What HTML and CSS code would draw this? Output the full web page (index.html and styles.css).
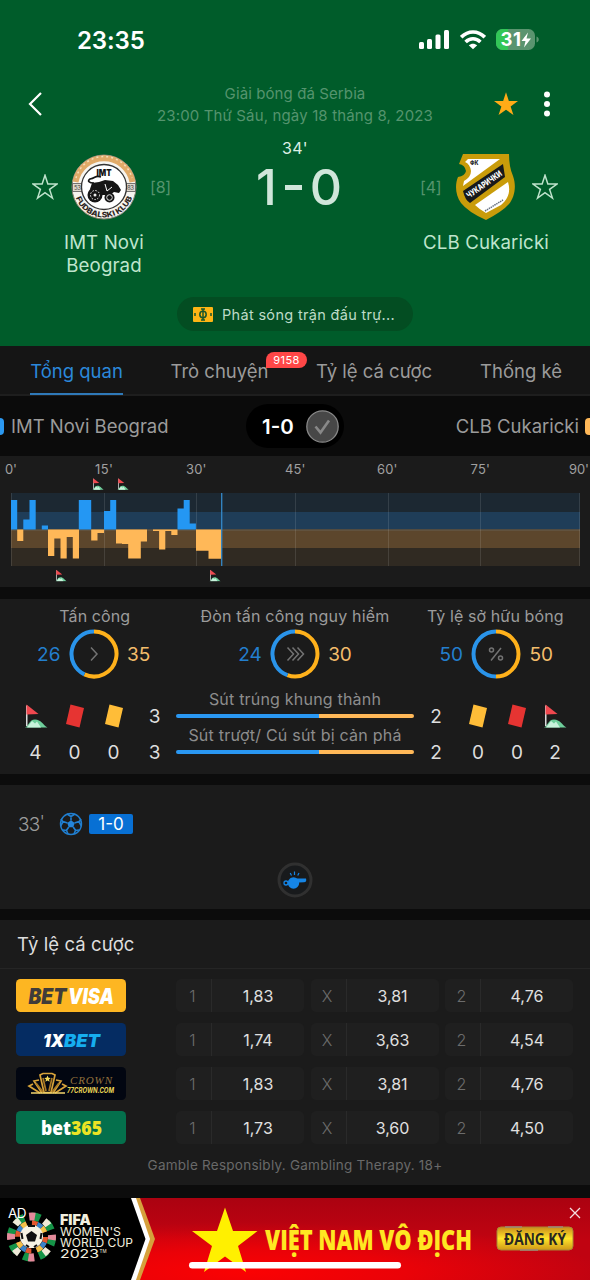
FILE: index.html
```html
<!DOCTYPE html>
<html lang="vi">
<head>
<meta charset="utf-8">
<title>IMT Novi Beograd - CLB Cukaricki</title>
<link rel="stylesheet" href="styles.css">
</head>
<body>
<svg class="defs" width="0" height="0">
  <symbol id="flag" viewBox="0 0 24 24">
    <path d="M1 23.5C5 22 5 15.500 11 15.500S19 21 23.500 23.500Z" fill="#6fcf9c"/>
    <path d="M3 23.500L8 17l3 2.500 2-2 4 6Z" fill="#c9f2dc"/>
    <path d="M2 1.500h1.500V22H2Z" fill="#d9dcdc"/>
    <path d="M2.500 .500L14.500 10 2.500 10.500Z" fill="#f0484f"/>
  </symbol>
  <symbol id="star" viewBox="0 0 26 26">
    <path d="M13 1.300l2.850 8.700h9.150l-7.400 5.400 2.850 8.700-7.450-5.400-7.450 5.400 2.850-8.700-7.400-5.400h9.150Z"/>
  </symbol>
  <symbol id="card" viewBox="0 0 20 24"><path d="M5.500 .500L19 4 14.500 23.500 1 20Z" fill="currentColor"/></symbol>
</svg>

<header class="header">
  <div class="status">
    <span class="clock">23:35</span>
    <svg class="signal" width="31" height="20" viewBox="0 0 31 20" fill="#fff"><rect x="0" y="12" width="5" height="7" rx="1.500"/><rect x="8" y="9" width="5" height="10" rx="1.500"/><rect x="16.500" y="4.500" width="5" height="14.500" rx="1.500"/><rect x="25" y="0" width="5" height="19" rx="1.500"/></svg>
    <svg class="wifi" width="26" height="20" viewBox="0 0 26 20" fill="none" stroke="#fff" stroke-width="3.600"><path d="M1.200 7.200C8 .2 18 .2 24.800 7.200"/><path d="M5.600 12C10 7.700 16 7.700 20.400 12"/><path d="M13 19.300L8.800 15.300C11.300 13.100 14.700 13.100 17.200 15.300Z" fill="#fff" stroke="none"/></svg>
    <svg class="battery" width="44" height="22" viewBox="0 0 44 22"><rect width="39" height="21" rx="6.500" fill="#5a946f"/><path d="M6.500 0H12V21H6.500A6.500 6.500 0 0 1 0 14.500V6.500A6.500 6.500 0 0 1 6.500 0Z" fill="#32c657"/><path d="M40.500 7.500c3 1 3 5 0 6Z" fill="#5a946f"/><text x="4.500" y="17.300" textLength="20.500" font-size="18.500" font-weight="700" fill="#fff">31</text><path d="M32 3.500L25.500 12h4l-1.500 6.500L35 9.500h-4.500Z" fill="#fff"/></svg>
  </div>
  <div class="topbar">
    <svg class="back" width="16" height="26" viewBox="0 0 16 26" fill="none" stroke="#fff" stroke-width="2.200"><path d="M14 2L3 13l11 11"/></svg>
    <div class="league"><div class="l1">Giải bóng đá Serbia</div><div class="l2">23:00 Thứ Sáu, ngày 18 tháng 8, 2023</div></div>
    <svg class="fav" width="26" height="26" fill="#ffab17"><use href="#star"/></svg>
    <svg class="dots" width="8" height="26" fill="#fff"><circle cx="4" cy="3.500" r="3"/><circle cx="4" cy="13" r="3"/><circle cx="4" cy="22.500" r="3"/></svg>
  </div>
  <div class="match">
    <svg class="outline" width="26" height="26"><use href="#star"/></svg>
    <svg class="crest" width="66" height="66" viewBox="0 0 66 66">
      <circle cx="33" cy="33" r="32" fill="#f6f4ef" stroke="#8b8374"/>
      <path d="M4.500 28A29 29 0 0 1 61.500 28" fill="none" stroke="#e0aa68" stroke-width="6"/>
      <path d="M5 24A29 29 0 0 1 61 24" fill="none" stroke="#f5dcb8" stroke-width="1.500" stroke-dasharray="2 3"/>
      <path d="M1.500 29.500h10v8h-10ZM54.500 29.500h10v8h-10Z" fill="#ded8cd" stroke="#555" stroke-width=".8"/>
      <circle cx="33" cy="33" r="22.500" fill="#fff" stroke="#333" stroke-width="1.300"/>
      <text x="3" y="36" font-size="6" fill="#444" textLength="7">53</text><text x="56" y="36" font-size="6" fill="#444" textLength="7">83</text>
      <text x="25.500" y="21.500" font-size="9.500" font-weight="900" fill="#111" textLength="15" lengthAdjust="spacingAndGlyphs">IMT</text>
      <path d="M19 35l2-6 7-1 6-2 8 1 5 4 3 5-2 3-5-1-4 3H29l-8-1Z" fill="#151515"/>
      <path d="M34 30l2 7 5-4" stroke="#fff" fill="none"/>
      <path d="M23 29c-5 0-7-2-4-4 6-1 5-4 11-2" fill="none" stroke="#151515" stroke-width="1.700"/>
      <circle cx="24" cy="41" r="7.500" fill="#151515"/><circle cx="24" cy="41" r="4.500" fill="none" stroke="#eee" stroke-dasharray="1.500 1.500"/><circle cx="24" cy="41" r="1.500" fill="#eee"/>
      <circle cx="38.500" cy="43.500" r="5" fill="#151515"/><circle cx="38.500" cy="43.500" r="2.800" fill="none" stroke="#ddd"/>
      <path id="crestArc" d="M3.500 39A30 30 0 0 0 62.500 39" fill="none"/>
      <text font-size="7.600" font-weight="800" fill="#2e2623" textLength="73" lengthAdjust="spacingAndGlyphs"><textPath href="#crestArc" startOffset="5">FUDBALSKI KLUB</textPath></text>
    </svg>
    <span class="rank">[8]</span>
    <div class="score"><span class="minute">34'</span><span class="goals">1<i></i>0</span></div>
    <span class="rank">[4]</span>
    <svg class="crest" width="66" height="68" viewBox="0 0 66 68">
      <path d="M10 1H56Q56 14 60 23C64 34 61 45 56 51Q50 58 33 67 15 59 8 50C2 42 2 31 5 24Q12 23 13 18 12 12 6 11Z" fill="#c99c0a"/>
      <path d="M15 6H47L10 33 11 28Q18 24 18 18 17 11 12 9Z" fill="#fff"/><path d="M55 29C58 39 55 46 48 52L33 60Q26 56 22 52Z" fill="#fff"/>
      <path d="M10 38L50 11 52 24 17 50Q12 47 10 38Z" fill="#17191b"/>
      <text x="17" y="12" font-size="6" font-weight="800" fill="#222" textLength="8.500" lengthAdjust="spacingAndGlyphs">ФК</text>
      <text transform="translate(16 45.500) rotate(-35)" font-size="8.500" font-weight="800" fill="#fff" textLength="41" lengthAdjust="spacingAndGlyphs">ЧУКАРИЧКИ</text>
      <path d="M32 58L50 47" stroke="#647080" stroke-width="1.500" stroke-dasharray="1.500 .7"/>
    </svg>
    <svg class="outline" width="26" height="26"><use href="#star"/></svg>
  </div>
  <div class="names"><span class="name">IMT Novi<br>Beograd</span><span class="name away">CLB Cukaricki</span></div>
  <div class="live">
    <svg width="20" height="15" viewBox="0 0 20 15"><rect width="20" height="15" rx="1" fill="#fdb515"/><path d="M10 1.500v12M8 2h4M8 13h4M2 6v3M18 6v3" stroke="#17552c" stroke-width="1.500"/><circle cx="10" cy="7.500" r="3.200" fill="none" stroke="#17552c" stroke-width="1.500"/></svg>
    <span>Phát sóng trận đấu trự...</span>
  </div>
</header>

<nav class="tabs">
  <span class="tab active">Tổng quan</span>
  <span class="tab chat">Trò chuyện<b class="badge">9158</b></span>
  <span class="tab odds-tab">Tỷ lệ cá cược</span>
  <span class="tab stat-tab">Thống kê</span>
</nav>

<div class="scorebar">
  <i class="mark home-mark"></i><span class="side home">IMT Novi Beograd</span>
  <div class="toggle"><span>1-0</span><svg width="33" height="33" viewBox="0 0 33 33"><circle cx="16.500" cy="16.500" r="15.700" fill="#474747" stroke="#888" stroke-width="1.300"/><path d="M9.500 16.500l5 6L23 10.500" fill="none" stroke="#888" stroke-width="2.600"/></svg></div>
  <span class="side guest">CLB Cukaricki</span><i class="mark guest-mark"></i>
</div>

<section class="chart">
  <svg width="590" height="131" viewBox="0 456 590 131">
    <g class="axis"><text x="5" y="474" textLength="12">0'</text><text x="95" y="474" textLength="18">15'</text><text x="186" y="474" textLength="20.500">30'</text><text x="285" y="474" textLength="20.500">45'</text><text x="377" y="474" textLength="20.500">60'</text><text x="470.500" y="474" textLength="19.500">75'</text><text x="569" y="474" textLength="20">90'</text></g>
    <rect x="11" y="493" width="569" height="19" fill="#1c2832"/><rect x="11" y="512" width="569" height="17.500" fill="#1f3d58"/>
    <rect x="11" y="529.500" width="569" height="18.500" fill="#5c462c"/><rect x="11" y="548" width="569" height="18" fill="#302a22"/>
    <path d="M11 530h569" stroke="#665e50"/>
    <path d="M11.500 493v73M104.500 493v73M196.500 493v73M295.500 493v73M388.500 493v73M480.500 493v73M579.500 493v73" stroke="#fff" stroke-opacity=".11"/>
    <path fill="#2497f3" d="M11 500h6.200v29.500H11ZM23.300 519.500h6.200V500h6.200v29.500H23.300ZM41.800 525.500H48v4h-6.200ZM78.800 500h12.400v29.500H78.800ZM104 511h6.200V500h6v29.500H104ZM177.500 508.500h6.200V500h6v23.500h6.200v6h-18.400Z"/>
    <path fill="#ffb858" d="M17.200 529.500h6.100V541h-6.100ZM48 529.500h31V558.500h-6.200V537h-6.100v21.500h-6.200v-20h-6.200V556H48ZM91.200 529.500H104V533h-6.500v7.500h-6.300ZM116 529.500h31V541.500h-6.200v17H128.200V544H122v-.500h-6ZM153 529.500h24.500V535h-6.200v-4h-6v18.500h-6.200V531H153ZM196 529.500h25.200v29.200h-12.700v-8H196Z"/>
    <path d="M221.700 493v73" stroke="#3488c8" stroke-width="1.300"/>
    <use href="#flag" x="92" y="478" width="12" height="12"/><use href="#flag" x="117" y="478" width="12" height="12"/><use href="#flag" x="55" y="569.500" width="12" height="12"/><use href="#flag" x="209" y="569.500" width="12" height="12"/>
  </svg>
</section>

<section class="stats">
  <div class="rings">
    <div class="stat"><div class="stat-title t1">Tấn công</div><div class="stat-row"><span class="hv">26</span><svg width="50" height="50" viewBox="0 0 50 50" fill="none"><path class="ring-a" d="M25 2.500A22.500 22.500 0 1 1 15.400 45.350"/><path class="ring-h" d="M25 2.500A22.500 22.500 0 0 0 15.400 45.350"/><path class="glyph" d="M22 18.500l6 6.500-6 6.500"/></svg><span class="av">35</span></div></div>
    <div class="stat"><div class="stat-title t2">Đòn tấn công nguy hiểm</div><div class="stat-row"><span class="hv">24</span><svg width="50" height="50" viewBox="0 0 50 50" fill="none"><path class="ring-a" d="M25 2.500A22.500 22.500 0 1 1 17.400 46.200"/><path class="ring-h" d="M25 2.500A22.500 22.500 0 0 0 17.400 46.200"/><path class="glyph" d="M17.500 18.500l6 6.500-6 6.500M22.500 18.500l6 6.500-6 6.500M27.500 18.500l6 6.500-6 6.500"/></svg><span class="av">30</span></div></div>
    <div class="stat"><div class="stat-title t3">Tỷ lệ sở hữu bóng</div><div class="stat-row"><span class="hv">50</span><svg width="50" height="50" viewBox="0 0 50 50" fill="none"><path class="ring-a" d="M25 2.500A22.500 22.500 0 0 1 25 47.500"/><path class="ring-h" d="M25 2.500A22.500 22.500 0 0 0 25 47.500"/><g class="glyph"><path d="M30 19L20 31.500"/><circle cx="20.500" cy="21" r="2"/><circle cx="29.500" cy="29" r="2"/></g></svg><span class="av">50</span></div></div>
  </div>
  <div class="counts">
    <svg width="24" height="24"><use href="#flag"/></svg><svg class="red" width="20" height="24"><use href="#card"/></svg><svg class="yellow" width="20" height="24"><use href="#card"/></svg><span>3</span>
    <div class="meter"><span class="m1">Sút trúng khung thành</span><i></i></div>
    <span>2</span><svg class="yellow" width="20" height="24"><use href="#card"/></svg><svg class="red" width="20" height="24"><use href="#card"/></svg><svg width="24" height="24"><use href="#flag"/></svg>
    <span>4</span><span>0</span><span>0</span><span>3</span>
    <div class="meter"><span class="m2">Sút trượt/ Cú sút bị cản phá</span><i></i></div>
    <span>2</span><span>0</span><span>0</span><span>2</span>
  </div>
</section>

<section class="events">
  <div class="event">
    <span class="when">33<sup>'</sup></span>
    <svg width="24" height="24" viewBox="0 0 24 24"><circle cx="12" cy="12" r="10.500" fill="#1b1b1b" stroke="#217fd0" stroke-width="1.400"/><path d="M12 8.200l3.700 2.700-1.400 4.300H9.700l-1.400-4.300Z" fill="#2585da"/><path d="M12 8.500V4M15.500 11l4.500-1.500M14.200 15l2.800 4M9.800 15L7 19M8.500 11L4 9.500M8 2l4 2.500L16 2M22 7l-2 3 2.500 4M20 18l-3.500.5L15 22M9 22L7.500 18.500 4 18M1.500 14L4 10 2 7" fill="none" stroke="#217fd0" stroke-width="1.600"/></svg>
    <b class="result">1-0</b>
  </div>
  <div class="whistle"><svg width="36" height="36" viewBox="0 0 36 36"><circle cx="18" cy="18" r="16" fill="#181a1c" stroke="#303030" stroke-width="3"/><circle cx="16.500" cy="21" r="5.700" fill="#1585e6"/><path d="M13 16.500h16q1 3.500-2 3.700L22 20.500l-5 1Z" fill="#1585e6"/><circle cx="9" cy="21" r="2" fill="none" stroke="#1585e6" stroke-width="1.300"/><path d="M14.500 13.500l-1.300-2.500M17.500 13V9.500M20.700 13.500l1.300-2.500" stroke="#1585e6" stroke-width="1.200"/></svg></div>
</section>

<section class="odds">
  <h2>Tỷ lệ cá cược</h2>
  <div class="rows">
    <div class="row"><svg class="logo" viewBox="0 0 110 33"><rect width="110" height="33" rx="4.500" fill="#fdb622"/><g font-size="21.500" font-weight="900" font-style="italic"><text x="12.500" y="24.500" fill="#403c39" textLength="38" lengthAdjust="spacingAndGlyphs">BET</text><text x="52" y="24.500" fill="#fff" textLength="46" lengthAdjust="spacingAndGlyphs">VISA</text></g></svg><div class="cell"><em>1</em><span>1,83</span></div><div class="cell"><em>X</em><span>3,81</span></div><div class="cell"><em>2</em><span>4,76</span></div></div>
    <div class="row"><svg class="logo" viewBox="0 0 110 33"><rect width="110" height="33" rx="4.500" fill="#052c62"/><g font-size="18" font-weight="900" font-style="italic"><text x="27" y="23.500" fill="#fff" textLength="21" lengthAdjust="spacingAndGlyphs">1X</text><text x="48" y="23.500" fill="#16aeef" textLength="36" lengthAdjust="spacingAndGlyphs">BET</text></g></svg><div class="cell"><em>1</em><span>1,74</span></div><div class="cell"><em>X</em><span>3,63</span></div><div class="cell"><em>2</em><span>4,54</span></div></div>
    <div class="row"><svg class="logo" viewBox="0 0 110 33"><rect width="110" height="33" rx="4.500" fill="#020611"/><g fill="none" stroke="#d8a33a" stroke-width="1.700"><path d="M24 8l3-1.500h9l3 1.500-4 17.500h-7Z"/><path d="M23 13l-5 1 8 12M40 13l5 1-8 12M17 17l-4 2 11 7M46 17l4 2-11 7"/><path d="M15 26h34" stroke="#f3d56e"/><path d="M27 11l3 13M36 11l-3 13M20 16l7 9M43 16l-7 9" stroke="#a87825"/></g><path d="M31.500 8.500l1 2.200 2.300.2-1.800 1.500.6 2.400-2.100-1.300-2.100 1.300.6-2.400-1.800-1.500 2.300-.2Z" fill="#f5dc5d"/><text class="script" x="54" y="17" font-size="11" fill="#94723d" textLength="42">CROWN</text><text x="51" y="26.300" font-size="7" font-weight="700" font-style="italic" fill="#e8d355" textLength="47" lengthAdjust="spacingAndGlyphs">77CROWN.COM</text></svg><div class="cell"><em>1</em><span>1,83</span></div><div class="cell"><em>X</em><span>3,81</span></div><div class="cell"><em>2</em><span>4,76</span></div></div>
    <div class="row"><svg class="logo open" viewBox="0 0 110 33"><rect width="110" height="33" rx="4.500" fill="#04704c"/><g font-size="18.500" font-weight="800"><text x="25" y="24" fill="#fff" textLength="30" lengthAdjust="spacingAndGlyphs">bet</text><text x="55" y="24" fill="#ece324" textLength="31" lengthAdjust="spacingAndGlyphs">365</text></g></svg><div class="cell"><em>1</em><span>1,73</span></div><div class="cell"><em>X</em><span>3,60</span></div><div class="cell"><em>2</em><span>4,50</span></div></div>
  </div>
  <p class="notice">Gamble Responsibly. Gambling Therapy. 18+</p>
</section>

<footer class="ad">
  <svg width="590" height="82" viewBox="0 0 590 82">
    <defs><radialGradient id="red" cx=".42" cy=".9" r=".6"><stop offset="0" stop-color="#fb0203"/><stop offset=".45" stop-color="#ea0208"/><stop offset="1" stop-color="#c00311"/></radialGradient><linearGradient id="shade" x2="0" y2="1"><stop stop-color="#8b0010" stop-opacity=".4"/><stop offset=".5" stop-color="#8b0010" stop-opacity="0"/></linearGradient><linearGradient id="gold" x2="0" y2="1"><stop stop-color="#c98b1b"/><stop offset=".5" stop-color="#ffe52a"/><stop offset="1" stop-color="#cf9817"/></linearGradient></defs>
    <rect width="590" height="82" fill="url(#red)"/><rect width="590" height="82" fill="url(#shade)"/>
    <path d="M0 0H140L155 41 140 82H0Z" fill="#d6a03c"/><path d="M0 0H136L150 41 136 82H0Z" fill="#fff"/><path d="M0 0H131L145.500 41 131 82H0Z" fill="#000"/>
    <g fill="none"><circle cx="31.500" cy="39" r="20.500" stroke="#159447" stroke-width="8" stroke-dasharray="8.050 8.050"/><circle cx="31.500" cy="39" r="20.500" stroke="#e58a9b" stroke-width="8" stroke-dasharray="6 26.200" stroke-dashoffset="3"/><circle cx="31.500" cy="39" r="20.500" stroke="#f0ead8" stroke-width="7" stroke-dasharray="6 26.200" stroke-dashoffset="-13"/><circle cx="31.500" cy="39" r="14" stroke="#e5572d" stroke-width="5" stroke-dasharray="5.500 5.500"/><circle cx="31.500" cy="39" r="14" stroke="#3b83c9" stroke-width="5" stroke-dasharray="5.500 16.490" stroke-dashoffset="-5.500"/><circle cx="31.500" cy="39" r="14" stroke="#f2c24a" stroke-width="5" stroke-dasharray="5.500 16.490" stroke-dashoffset="-11"/></g>
    <circle cx="31.500" cy="38.500" r="11.500" fill="#f7f3e4"/><path d="M31.500 33l5.500 4-2 6.500h-7L26 37Z" fill="#111"/><path d="M28 28h7M21.500 35l1 6M41.500 35l-1 6M26 47l3 2M37 47l-3 2" stroke="#111" stroke-width="2"/>
    <text x="8" y="19.500" font-size="13.500" fill="#fff" textLength="18.500">AD</text>
    <g class="fifa"><text x="60" y="26.500" font-size="14" font-weight="900" textLength="31" lengthAdjust="spacingAndGlyphs">FIFA</text><text x="60" y="37.500" textLength="61" lengthAdjust="spacingAndGlyphs">WOMEN'S</text><text x="60" y="48.500" textLength="73" lengthAdjust="spacingAndGlyphs">WORLD CUP</text><text x="60" y="60" textLength="39" lengthAdjust="spacingAndGlyphs">2023</text><text class="tm" x="99.500" y="54.500" textLength="7">TM</text></g>
    <path d="M225 9.500l8 23.500h24.500L238 48l8 26-21-15.500L204 74l8-26-20-15h25Z" fill="#fff000"/>
    <text class="slogan" x="265" y="51.500" textLength="207" lengthAdjust="spacingAndGlyphs">VIỆT NAM VÔ ĐỊCH</text>
    <rect x="497" y="29" width="76" height="23" rx="4" fill="url(#gold)" stroke="#a98635"/>
    <path d="M505 29h17M548 29h15M520 52h18" stroke="#9b897a" stroke-width="1.500"/>
    <text class="join" x="504" y="46.500" textLength="62" lengthAdjust="spacingAndGlyphs">ĐĂNG KÝ</text>
    <path d="M570 10l10 10M580 10l-10 10" stroke="#f4dfe0" stroke-width="1.300"/>
    <rect x="189" y="64" width="212" height="6.500" rx="3.250" fill="#fff"/>
  </svg>
</footer>
</body>
</html>
```
FILE: styles.css
```css
* { box-sizing: border-box; }
body { margin: 0; width: 590px; height: 1280px; overflow: hidden; background: #0c0c0c; color: #9b9b9b; font-family: Inter, "Noto Sans", sans-serif; white-space: nowrap; }
svg { display: block; flex: none; }
.defs { position: absolute; }

.header { height: 346px; background: #005c2a; }
.status { display: flex; align-items: center; height: 80px; padding-left: 77px; }
.clock { width: 342px; font-size: 24px; font-weight: 600; color: #fff; letter-spacing: -.1px; }
.wifi { margin-left: 10px; }
.battery { margin-left: 10px; }
.topbar { display: flex; align-items: center; height: 48px; padding-left: 27px; }
.league { width: 450px; margin-left: 27px; padding-top: 1px; text-align: center; font-size: 15px; line-height: 22px; color: #55946e; }
.l1 { letter-spacing: .1px; }
.l2 { letter-spacing: .14px; }
.fav { margin-left: -27px; }
.dots { margin-left: 24px; }
.match { display: flex; align-items: center; height: 96px; margin-top: 11px; padding-left: 32px; }
.outline { fill: none; stroke: #bfe3cc; stroke-width: 1.5px; }
.crest { margin: 0 13px; }
.rank { width: 20px; text-align: center; font-size: 16px; color: #55946e; letter-spacing: -.2px; }
.score { display: flex; flex-direction: column; align-items: center; width: 250px; height: 96px; }
.minute { line-height: 18px; font-size: 16px; color: #dcefe4; letter-spacing: .3px; }
.goals { display: flex; align-items: center; gap: 8px; margin-left: 8px; line-height: 60px; font-size: 50px; font-weight: 500; color: #d0e6da; }
.goals i { width: 17px; height: 5px; background: #d0e6da; }
.names { display: flex; justify-content: space-between; margin-top: -4px; padding: 0 29px; text-align: center; font-size: 18.700px; line-height: 23px; color: #bfe5cd; letter-spacing: .1px; }
.name { width: 150px; }
.live { display: flex; align-items: center; gap: 9px; width: 236px; height: 34px; margin: 20px auto 0; padding-left: 16px; border-radius: 17px; background: #034d22; color: #bedbc8; font-size: 14.500px; letter-spacing: .32px; }

.tabs { display: flex; gap: 48px; height: 50px; padding-left: 30px; background: #151515; border-bottom: 2px solid #1e1e1e; font-size: 18.500px; line-height: 50px; }
.tab { position: relative; display: flex; justify-content: center; width: 93px; height: 49px; }
.active { color: #2b88da; border-bottom: 2px solid #2f79b8; }
.chat { width: 97px; }
.odds-tab { width: 116px; }
.stat-tab { width: 82px; }
.badge { position: absolute; left: 95px; top: 6px; width: 41px; height: 16px; border-radius: 8px 8px 8px 0; background: #ff4747; color: #fff; font-size: 11px; font-weight: 400; line-height: 16px; text-align: center; letter-spacing: .4px; }

.scorebar { display: flex; align-items: center; height: 60px; background: #0b0b0b; font-size: 18.500px; }
.mark { flex: none; width: 4px; height: 17px; }
.home-mark { background: #2b98f0; border-radius: 0 4px 4px 0; }
.guest-mark { width: 5px; margin-left: 6px; background: #ffb858; border-radius: 4px 0 0 4px; }
.side { width: 235px; }
.home { margin-left: 7px; }
.guest { text-align: right; }
.toggle { display: flex; align-items: center; justify-content: space-between; flex: none; width: 98px; height: 44px; padding: 0 5px 0 16px; border-radius: 22px; background: #000; color: #fff; font-size: 20.500px; font-weight: 600; }

.chart { height: 131px; background: #1b1b1b; }
.axis text { font-size: 13px; fill: #a0a0a0; }

.stats { height: 175px; margin-top: 12px; background: #1b1b1b; }
.rings { display: grid; grid-template-columns: repeat(3, 201.25px); justify-content: center; }
.stat-title { height: 30px; padding-top: 6px; text-align: center; font-size: 16px; line-height: 22px; letter-spacing: .1px; }
.t1 { padding-left: 2px; }
.t2 { letter-spacing: .2px; }
.t3 { padding-right: 2px; }
.stat-row { display: flex; align-items: center; justify-content: center; gap: 8px; font-size: 19px; }
.stat-row span { width: 24px; text-align: center; }
.hv { color: #237fce; }
.av { color: #f3bd6b; }
.ring-a { stroke: #ffb11b; stroke-width: 4px; }
.ring-h { stroke: #2a94ea; stroke-width: 4px; }
.glyph { stroke: #737373; stroke-width: 1.5px; }
.counts { display: grid; grid-template-columns: 39px 39px 39px 43px 238px 44px 40px 38px 38px; grid-template-rows: 36px 36px; align-items: center; justify-items: center; margin-top: 19px; padding-left: 16px; color: #dedede; font-size: 19px; }
.red { color: #e63432; }
.yellow { color: #ffbd38; }
.meter { width: 238px; height: 57px; text-align: center; color: #8d8d8d; font-size: 16px; line-height: 22px; }
.meter i { display: block; height: 4px; margin-top: 4px; border-radius: 2px; background: linear-gradient(90deg, #2a98f3 60%, #ffb858 60%); }
.m1 { letter-spacing: .2px; }
.m2 { letter-spacing: .22px; }

.events { height: 124px; margin-top: 11px; padding-top: 24px; background: #1b1b1b; }
.event { display: flex; align-items: center; height: 30px; padding-left: 18px; }
.when { width: 41px; font-size: 19px; font-weight: 300; letter-spacing: -.7px; }
.when sup { font-size: 17px; line-height: 0; vertical-align: 3px; }
.result { width: 44px; height: 20px; margin-left: 6px; border-radius: 2px; background: #0870d4; color: #fff; font-size: 17px; font-weight: 400; line-height: 20px; text-align: center; }
.whistle { display: flex; justify-content: center; margin-top: 23px; }

.odds { height: 265px; margin-top: 11px; background: #1b1b1b; }
.odds h2 { height: 49px; margin: 0; padding-left: 17px; border-bottom: 1px solid #252525; color: #dedede; font-size: 18.500px; font-weight: 400; line-height: 48px; letter-spacing: .1px; }
.rows { display: grid; gap: 11px; padding: 10px 0 0 16px; }
.row { display: flex; height: 33px; gap: 6.500px; }
.logo { width: 110px; height: 33px; margin-right: 43.500px; }
.open { font-family: "Open Sans", sans-serif; }
.script { font-family: "Liberation Serif", serif; font-style: italic; }
.cell { display: grid; grid-template-columns: 36px 1fr; width: 128px; height: 33px; border-radius: 5px; background: #1f1f1f; line-height: 34px; text-align: center; font-size: 16px; color: #e0e0e0; overflow: hidden; }
.cell em { padding-right: 2px; border-right: 1px solid #2a2a2a; color: #6c6c6c; font-style: normal; font-weight: 300; }
.notice { margin: 13px 0 0; text-align: center; font-size: 13.500px; line-height: 16px; color: #696969; letter-spacing: .26px; }

.ad { margin-top: 13px; }
.fifa { fill: #f2efdf; font-size: 12px; }
.tm { font-size: 4.500px; }
.slogan { fill: #ffe722; font-family: "Open Sans", sans-serif; font-size: 28px; font-weight: 800; }
.join { fill: #282721; font-family: "Open Sans", sans-serif; font-size: 16.500px; font-weight: 700; }
```
